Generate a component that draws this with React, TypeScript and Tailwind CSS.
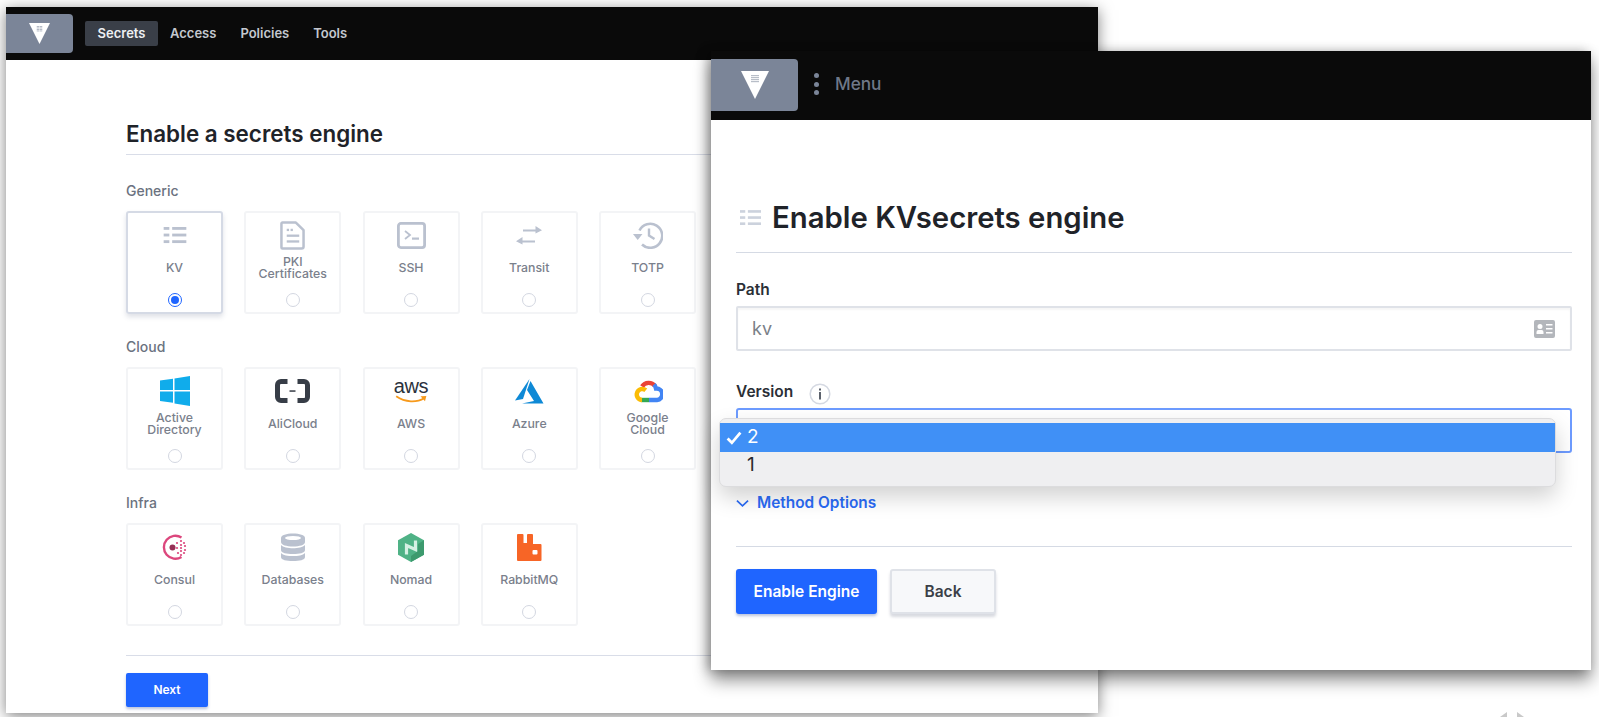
import type { ReactNode } from "react";

const GRAY = "#bac1cf";

function ListIcon({ className, color = GRAY }: { className?: string; color?: string }) {
  return (
    <svg viewBox="0 0 24 18" className={className} fill={color}>
      <rect x="0" y="0" width="6" height="3" />
      <rect x="9" y="0" width="15" height="3" />
      <rect x="0" y="7" width="6" height="3" />
      <rect x="9" y="7" width="15" height="3" />
      <rect x="0" y="14" width="6" height="3" />
      <rect x="9" y="14" width="15" height="3" />
    </svg>
  );
}

function PkiIcon() {
  return (
    <svg viewBox="0 0 26 30" className="h-[29px] w-[25px]" fill="none">
      <path d="M2.5 1.5h14l8 8v17a2 2 0 0 1-2 2h-20a1 1 0 0 1-1-1v-25a1 1 0 0 1 1-1z" stroke={GRAY} strokeWidth="2.6" strokeLinejoin="round" />
      <rect x="7" y="8" width="2.4" height="2.4" fill={GRAY} />
      <rect x="11" y="8" width="2.4" height="2.4" fill={GRAY} />
      <rect x="7" y="14" width="13" height="2.4" fill={GRAY} />
      <rect x="7" y="20" width="13" height="2.4" fill={GRAY} />
    </svg>
  );
}

function SshIcon() {
  return (
    <svg viewBox="0 0 29 27" className="h-[27px] w-[29px]" fill="none">
      <rect x="1.4" y="1.4" width="26.2" height="24.2" rx="2.5" stroke={GRAY} strokeWidth="2.8" />
      <path d="M8 9l5 4-5 4" stroke={GRAY} strokeWidth="1.8" />
      <rect x="15" y="15.5" width="7" height="2.2" fill={GRAY} />
    </svg>
  );
}

function TransitIcon() {
  return (
    <svg viewBox="0 0 26 19" className="h-[19px] w-[26px]" fill={GRAY}>
      <path d="M7 7.5h12.5V4L26 8.2l-6.5 3.4V9.6H7z" transform="translate(0 -4)" />
      <path d="M19 11.5H6.5V8L0 12.2l6.5 3.4v-2H19z" transform="translate(0 3)" />
    </svg>
  );
}

function TotpIcon() {
  return (
    <svg viewBox="0 0 30 28" className="h-[28px] w-[30px]" fill="none">
      <path d="M6.5 9.5A12 12 0 1 1 9 23.5" stroke={GRAY} strokeWidth="2.6" />
      <path d="M0 13h9.5l-4.8 6z" fill={GRAY} />
      <path d="M16 7.5v7l5.5 3.5" stroke={GRAY} strokeWidth="2.4" />
    </svg>
  );
}

function WindowsIcon() {
  return (
    <svg viewBox="0 0 30 30" className="h-[30px] w-[30px]" fill="#10aceb">
      <polygon points="0,4.5 13,2.7 13,14 0,14" />
      <polygon points="14.5,2.5 30,0 30,14 14.5,14" />
      <polygon points="0,15.5 13,15.5 13,26.8 0,25" />
      <polygon points="14.5,15.5 30,15.5 30,30 14.5,27.6" />
    </svg>
  );
}

function AliIcon() {
  return (
    <svg viewBox="0 0 35 24" className="h-[24px] w-[35px]" fill="none">
      <path d="M12.5 2.5H6a3.5 3.5 0 0 0-3.5 3.5v12A3.5 3.5 0 0 0 6 21.5h6.5" stroke="#373d47" strokeWidth="5" />
      <path d="M22.5 2.5H29a3.5 3.5 0 0 1 3.5 3.5v12a3.5 3.5 0 0 1-3.5 3.5h-6.5" stroke="#373d47" strokeWidth="5" />
      <rect x="14.5" y="11.3" width="6" height="1.5" fill="#373d47" />
    </svg>
  );
}

function AwsIcon() {
  return (
    <div className="flex h-[34px] flex-col items-center justify-center">
      <span className="text-[20px] leading-[17px] font-normal tracking-[-0.4px] text-[#2b323d] [font-family:'Liberation_Sans',sans-serif]">aws</span>
      <svg viewBox="0 0 36 10" className="h-[9px] w-[35px]" fill="none">
        <path d="M1 1.5C11 8.5 24 8.5 32 3.5" stroke="#f79a1c" strokeWidth="2" />
        <path d="M28 1.5l6.5-.5-1.5 6z" fill="#f79a1c" />
      </svg>
    </div>
  );
}

function AzureIcon() {
  return (
    <svg viewBox="0 0 29 25" className="h-[25px] w-[29px]">
      <polygon points="14.5,0 0,21.5 8,20 " fill="#0e89d6" />
      <polygon points="15.5,2 28.5,24.5 7,24.5 19,22 12,11" fill="#0e89d6" />
    </svg>
  );
}

function GoogleIcon() {
  return (
    <svg viewBox="0 0 30 25" className="h-[25px] w-[30px]" fill="none">
      <path d="M9 7.5A8 8 0 0 1 22 7" stroke="#ea4335" strokeWidth="4.4" />
      <path d="M21 5.5A8 8 0 0 1 23 9.5 5.6 5.6 0 0 1 24 21h-8" stroke="#4285f4" strokeWidth="4.4" />
      <path d="M16 21H8.5" stroke="#34a853" strokeWidth="4.4" />
      <path d="M9 21a5.5 5.5 0 1 1 3.8-9.7" stroke="#fbbc05" strokeWidth="4.4" />
    </svg>
  );
}

function ConsulIcon() {
  const dots = [[16, 10], [20, 8], [23, 10], [20, 12], [24, 13], [16, 15], [20, 15], [24, 17], [20, 18], [23, 20], [20, 22], [17, 20]];
  return (
    <svg viewBox="0 0 28 28" className="h-[28px] w-[28px]" fill="none">
      <path d="M20.5 4.5A11.5 11.5 0 1 0 20.5 24" stroke="#dc477d" strokeWidth="2.4" />
      <circle cx="11.5" cy="14.5" r="3" fill="#962f55" />
      {dots.map(([cx, cy]) => (
        <circle key={`${cx}-${cy}`} cx={cx} cy={cy} r="1.1" fill="#dc477d" />
      ))}
    </svg>
  );
}

function DatabaseIcon() {
  return (
    <svg viewBox="0 0 24 28" className="h-[28px] w-[24px]" fill={GRAY}>
      <path d="M0 5c0-3 5.5-4.5 12-4.5S24 2 24 5v4c0 3-5.5 4.5-12 4.5S0 12 0 9z" />
      <ellipse cx="12" cy="5" rx="8" ry="2" fill="#fff" />
      <path d="M0 12c2 2.5 7 3.2 12 3.2s10-.7 12-3.2v5c0 3-5.5 4-12 4s-12-1-12-4z" />
      <path d="M0 20c2 2.5 7 3 12 3s10-.5 12-3v4c0 3-5.5 4-12 4s-12-1-12-4z" />
    </svg>
  );
}

function NomadIcon() {
  return (
    <svg viewBox="0 0 26 29" className="h-[29px] w-[26px]" fill="none">
      <polygon points="13,0 26,7.2 26,21.8 13,29 0,21.8 0,7.2" fill="#4fb286" />
      <polygon points="13,29 26,21.8 26,7.2 20,11 20,18 13,23" fill="#3d9a6e" />
      <path d="M8.5 21.500V12.500L17.500 16.500V7.500" stroke="#d6f0e4" strokeWidth="3.200" />
    </svg>
  );
}

function RabbitIcon() {
  return (
    <svg viewBox="0 0 25 27" className="h-[27px] w-[25px]">
      <path fillRule="evenodd" d="M1 0h4.500a1 1 0 0 1 1 1v8h3.500V1a1 1 0 0 1 1-1h4a1 1 0 0 1 1 1v9h7.500a1 1 0 0 1 1 1v15a1 1 0 0 1-1 1H1a1 1 0 0 1-1-1V1a1 1 0 0 1 1-1zM16.500 16a1 1 0 0 0-1 1v2.500a1 1 0 0 0 1 1h3a1 1 0 0 0 1-1V17a1 1 0 0 0-1-1z" fill="#f76526" />
    </svg>
  );
}

function VaultMark({ className, dots }: { className?: string; dots: string }) {
  return (
    <svg viewBox="0 0 28 28" className={className}>
      <polygon points="0,0 28,0 14,28" fill="#fff" />
      {[11, 13, 15, 17].map((x) =>
        [4, 6, 8, 10].map((y) => <rect key={`${x}-${y}`} x={x - 0.6} y={y} width="1.2" height="1.2" fill={dots} />)
      )}
    </svg>
  );
}

interface Engine {
  label: ReactNode;
  icon: ReactNode;
  selected?: boolean;
}

const GENERIC: Engine[] = [
  { label: "KV", icon: <ListIcon className="h-[17px] w-[24px]" />, selected: true },
  { label: <>PKI<br />Certificates</>, icon: <PkiIcon /> },
  { label: "SSH", icon: <SshIcon /> },
  { label: "Transit", icon: <TransitIcon /> },
  { label: "TOTP", icon: <TotpIcon /> },
];

const CLOUD: Engine[] = [
  { label: <>Active<br />Directory</>, icon: <WindowsIcon /> },
  { label: "AliCloud", icon: <AliIcon /> },
  { label: "AWS", icon: <AwsIcon /> },
  { label: "Azure", icon: <AzureIcon /> },
  { label: <>Google<br />Cloud</>, icon: <GoogleIcon /> },
];

const INFRA: Engine[] = [
  { label: "Consul", icon: <ConsulIcon /> },
  { label: "Databases", icon: <DatabaseIcon /> },
  { label: "Nomad", icon: <NomadIcon /> },
  { label: "RabbitMQ", icon: <RabbitIcon /> },
];

function EngineCard({ label, icon, selected }: Engine) {
  return (
    <div
      className={
        selected
          ? "flex h-[103px] w-[97px] flex-col items-center rounded-[3px] border-2 border-[#d5dae5] pt-[7px] shadow-[0_3px_5px_rgba(80,90,120,0.18)]"
          : "flex h-[103px] w-[97px] flex-col items-center rounded-[3px] border-2 border-[#f3f4f6] pt-[7px]"
      }
    >
      <div className="flex h-[30px] items-center justify-center">{icon}</div>
      <div className="mt-[3px] flex h-[30px] items-center text-center text-[12.3px] leading-[12px] font-medium text-[#7a808c]">
        <span>{label}</span>
      </div>
      {selected ? (
        <div className="mt-[10px] flex h-[14px] w-[14px] items-center justify-center rounded-full border-[1.5px] border-[#1f65ff]">
          <div className="h-[8px] w-[8px] rounded-full bg-[#1f65ff]" />
        </div>
      ) : (
        <div className="mt-[10px] h-[14px] w-[14px] rounded-full border-[1.5px] border-[#d3d7e1]" />
      )}
    </div>
  );
}

function EngineGroup({ title, engines }: { title: string; engines: Engine[] }) {
  return (
    <div className="mb-[24px]">
      <p className="mb-[11px] h-[18px] text-[14px] leading-[18px] font-medium text-[#6b7280]">{title}</p>
      <div className="grid grid-cols-[repeat(5,97px)] gap-x-[21.25px]">
        {engines.map((engine, i) => (
          <EngineCard key={i} {...engine} />
        ))}
      </div>
    </div>
  );
}

function SecretsWindow() {
  return (
    <div className="absolute top-[7px] left-[6px] h-[706px] w-[1092px] bg-white shadow-[0_3px_14px_rgba(0,0,0,0.5)]">
      <header className="flex h-[53px] items-center bg-[#0a0a0a]">
        <div className="mt-[-1px] flex h-[39px] w-[67px] items-center justify-center rounded-r-[4px] bg-[#7b8598]">
          <VaultMark className="h-[21px] w-[21px]" dots="#8a93a5" />
        </div>
        <nav className="ml-[12px] flex items-center text-[13px] font-semibold text-[#c4c8cf]">
          <span className="flex h-[25px] w-[73px] items-center justify-center rounded-[2px] bg-[#3a3f48] text-[#eef0f3]">Secrets</span>
          <span className="ml-[12px]">Access</span>
          <span className="ml-[24px]">Policies</span>
          <span className="ml-[24px]">Tools</span>
        </nav>
      </header>
      <main className="pt-[60px] pr-[60px] pl-[120px]">
        <h1 className="h-[34px] text-[22.4px] leading-[28px] font-semibold text-[#1f2329]">Enable a secrets engine</h1>
        <div className="mb-[27px] border-t-[1.5px] border-[#d9dde8]" />
        <EngineGroup title="Generic" engines={GENERIC} />
        <EngineGroup title="Cloud" engines={CLOUD} />
        <EngineGroup title="Infra" engines={INFRA} />
        <div className="mt-[29px] border-t-[1.5px] border-[#d9dde8]" />
        <button className="mt-[17px] h-[34px] w-[82px] rounded-[2px] bg-[#1f65ff] text-[12px] font-semibold text-white shadow-[0_2px_3px_rgba(30,60,140,0.3)]">
          Next
        </button>
      </main>
    </div>
  );
}

function KvWindow() {
  return (
    <div className="absolute top-[51px] left-[711px] h-[619px] w-[880px] bg-white shadow-[0_10px_16px_rgba(0,0,0,0.45),-4px_0_10px_rgba(0,0,0,0.25)]">
      <header className="flex h-[69px] items-center bg-[#0a0a0a]">
        <div className="mt-[-2px] flex h-[52px] w-[87px] items-center justify-center rounded-r-[4px] bg-[#7b8598]">
          <VaultMark className="h-[28px] w-[28px]" dots="#8a93a5" />
        </div>
        <div className="mt-[-3px] ml-[16px] flex flex-col gap-[3.5px]">
          <span className="h-[5px] w-[5px] rounded-full bg-[#7b8598]" />
          <span className="h-[5px] w-[5px] rounded-full bg-[#7b8598]" />
          <span className="h-[5px] w-[5px] rounded-full bg-[#7b8598]" />
        </div>
        <span className="mt-[-4px] ml-[16px] text-[17.2px] font-medium text-[#6f7888]">Menu</span>
      </header>
      <main className="pt-[76px] pr-[19px] pl-[25px]">
        <div className="flex h-[44px] items-center pl-[4px]">
          <ListIcon className="h-[16px] w-[21px]" color="#ccd2dd" />
          <h1 className="ml-[11px] text-[29.3px] leading-[44px] font-semibold text-[#1f2329]">Enable KVsecrets engine</h1>
        </div>
        <div className="mt-[12px] border-t-[1.5px] border-[#d5dae4]" />
        <label className="mt-[28px] block h-[18px] text-[15.5px] leading-[18px] font-semibold text-[#2b2f36]">Path</label>
        <div className="mt-[7px] flex h-[45px] items-center justify-between rounded-[2px] border-2 border-[#dfe2e8] pr-[15px] pl-[14px] shadow-[inset_0_2px_2px_rgba(0,0,0,0.04)]">
          <span className="text-[18px] text-[#7a7f88]">kv</span>
          <svg viewBox="0 0 21 18" className="h-[18px] w-[21px]" fill="#b3b6bb">
            <path fillRule="evenodd" d="M2 0h17a2 2 0 0 1 2 2v14a2 2 0 0 1-2 2H2a2 2 0 0 1-2-2V2a2 2 0 0 1 2-2zM6 4a2.500 2.500 0 1 0 0 5 2.500 2.500 0 0 0 0-5zM2.500 14h7v-2a2 2 0 0 0-2-2h-3a2 2 0 0 0-2 2zM12 4v1.600h6.500V4zm0 4v1.600h6.500V8zm0 4v1.600h6.500V12z" />
          </svg>
        </div>
        <div className="mt-[32px] flex h-[18px] items-center">
          <label className="text-[15.5px] leading-[18px] font-semibold text-[#2b2f36]">Version</label>
          <svg viewBox="0 0 22 22" className="mt-[3px] ml-[16px] h-[22px] w-[22px]" fill="none">
            <circle cx="11" cy="11" r="9.800" stroke="#d5d9e2" strokeWidth="1.500" />
            <rect x="10" y="9" width="2" height="7.500" fill="#5b616c" />
            <rect x="10" y="5.500" width="2" height="2" fill="#5b616c" />
          </svg>
        </div>
        <div className="relative mt-[7px] h-[45px] rounded-[3px] border-2 border-[#6d9bff]">
          <div className="absolute top-[8px] left-[-19px] h-[69px] w-[837px] rounded-[7px] border border-[#dcdcde] bg-[#efeff1] pt-[4px] text-[19px] shadow-[0_10px_22px_rgba(0,0,0,0.18)]">
            <div className="flex h-[29px] items-center bg-[#4090f6] text-white">
              <svg viewBox="0 0 15 13" className="ml-[6px] h-[14px] w-[16px]" fill="none">
                <path d="M1.500 7l4 4L13.500 1.500" stroke="#fff" strokeWidth="2.600" />
              </svg>
              <span className="ml-[5px]">2</span>
            </div>
            <div className="flex h-[27px] items-center pl-[27px] text-[#2b2b2e]">1</div>
          </div>
        </div>
        <div className="mt-[41px] flex h-[18px] items-center text-[15.4px] font-semibold text-[#2a6bf6]">
          <svg viewBox="0 0 14 9" className="h-[9px] w-[13px]" fill="none">
            <path d="M1 1.500l6 5.500 6-5.500" stroke="#2a6bf6" strokeWidth="1.800" />
          </svg>
          <span className="ml-[8px]">Method Options</span>
        </div>
        <div className="mt-[34px] border-t-[1.5px] border-[#d5dae4]" />
        <div className="mt-[22px] flex gap-[13px]">
          <button className="h-[45px] w-[141px] rounded-[3px] bg-[#1f65ff] text-[15.5px] font-semibold text-white shadow-[0_2px_3px_rgba(30,60,140,0.3)]">
            Enable Engine
          </button>
          <button className="h-[45px] w-[106px] rounded-[3px] border-2 border-[#dfe2e8] bg-[#f7f8fa] text-[15.5px] font-semibold text-[#3b3f47] shadow-[0_3px_3px_rgba(60,70,100,0.2)]">
            Back
          </button>
        </div>
      </main>
    </div>
  );
}

export default function App() {
  return (
    <div className="relative h-[717px] w-[1599px] overflow-hidden bg-white [font-family:Inter,sans-serif]">
      <SecretsWindow />
      <KvWindow />
      {/* pager arrows cut off at the bottom edge */}
      <svg viewBox="0 0 24 5" className="absolute top-[712px] left-[1500px] h-[5px] w-[24px]" fill="#c9c9c9">
        <polygon points="0,5 7,5 7,0" />
        <polygon points="17,0 17,5 24,5" />
      </svg>
    </div>
  );
}
